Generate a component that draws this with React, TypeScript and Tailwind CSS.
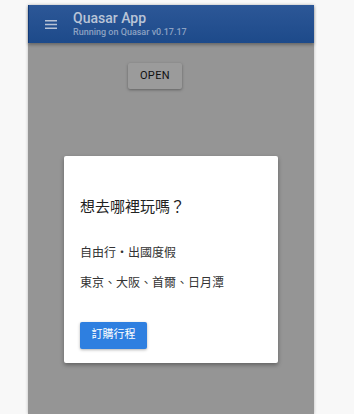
import React from "react";

export default function App() {
  const latin = { fontFamily: "Roboto, 'Noto Sans CJK TC', sans-serif" };
  const cjk = { fontFamily: "Roboto, 'Noto Sans CJK TC', 'Noto Sans CJK SC', sans-serif" };
  return (
    <div className="w-[354px] h-[414px] bg-[#f8f8f8] overflow-hidden pl-[28px] pt-[5px]" style={latin}>
      <div className="w-[286px] h-[409px] flex flex-col shadow-[0_0_3px_rgba(0,0,0,0.25)]">
        <div className="h-[38px] bg-gradient-to-b from-[#2c5797] to-[#1d4a8a] flex items-center pl-[16px] border-l border-[#123a78] shadow-[0_2px_3px_rgba(0,0,0,0.3)] relative z-10">
          <svg width="12" height="9" viewBox="0 0 12 9" className="mr-[16px]">
            <rect x="0" y="0" width="12" height="1.5" fill="#b8c3d6" />
            <rect x="0" y="3.75" width="12" height="1.5" fill="#b8c3d6" />
            <rect x="0" y="7.5" width="12" height="1.5" fill="#b8c3d6" />
          </svg>
          <div className="flex flex-col">
            <div className="text-[14px] leading-[15px] font-medium text-[#b9c4d7]">Quasar App</div>
            <div className="text-[9px] leading-[12px] font-medium text-[#8da2c3]">Running on Quasar v0.17.17</div>
          </div>
        </div>
        <div className="flex-1 bg-[#959595] relative">
          <div className="pt-[19px] pl-[100px]">
            <button className="w-[54px] h-[26px] bg-[#9b9b9b] rounded-[2px] shadow-[0_1px_3px_rgba(0,0,0,0.35)] text-[11px] text-[#111] tracking-[0.4px]">
              OPEN
            </button>
          </div>
          <div className="absolute inset-x-0 top-[113px] flex justify-center">
            <div className="w-[214px] h-[207px] bg-white rounded-[2px] shadow-[0_2px_4px_rgba(0,0,0,0.35)] flex flex-col items-start px-[16px] pt-[41px]" style={cjk}>
              <div className="text-[15px] leading-[20px] text-[#222]">想去哪裡玩嗎？</div>
              <div className="text-[12px] leading-[18px] text-[#333] mt-[27px]">自由行・出國度假</div>
              <div className="text-[12px] leading-[18px] text-[#333] mt-[12px]">東京、大阪、首爾、日月潭</div>
              <button className="mt-[30px] w-[67px] h-[27px] bg-[#2e7fe0] rounded-[2px] shadow-[0_1px_3px_rgba(0,0,0,0.3)] text-[11px] text-white flex items-center justify-center">
                訂購行程
              </button>
            </div>
          </div>
        </div>
      </div>
    </div>
  );
}
